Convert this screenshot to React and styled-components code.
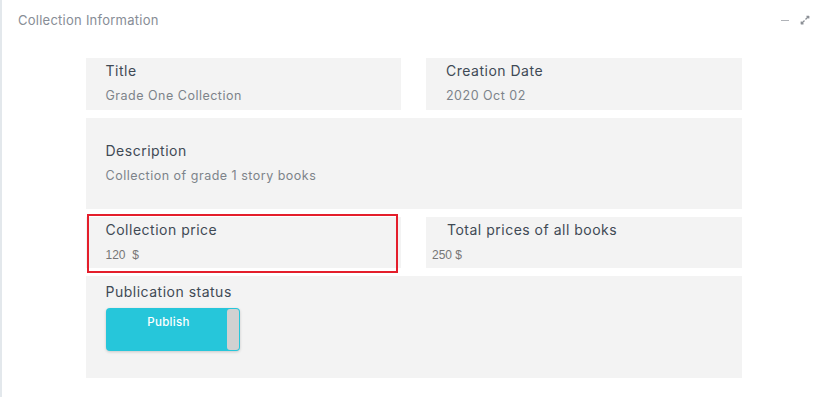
import styled, { createGlobalStyle } from 'styled-components';
import { FaExpandAlt } from 'react-icons/fa';

const GlobalStyle = createGlobalStyle`
  html, body {
    margin: 0;
    padding: 0;
    background: #fff;
  }
  body {
    font-family: Inter, "Noto Sans", sans-serif;
  }
`;

const Card = styled.section`
  height: 397px;
  box-sizing: border-box;
  border-left: 2px solid #e3e8ec;
  background: #fff;
`;

const Header = styled.header`
  display: flex;
  align-items: center;
  justify-content: space-between;
  padding: 10px 15px 10px 16px;
  line-height: 20px;
  & h2 {
    margin: 0;
    font-size: 13px;
    font-weight: 400;
    letter-spacing: 0.25px;
    color: #878d96;
  }
`;

const Tools = styled.div`
  display: flex;
  align-items: center;
  gap: 11px;
  color: #8c9096;
  & .minus {
    width: 8px;
    height: 1px;
    background: #b0b3b8;
  }
`;

const Grid = styled.div`
  width: 656px;
  margin: 18px auto 0;
  display: grid;
  grid-template-columns: 1fr 1fr;
  column-gap: 25px;
  row-gap: 8px;
`;

const Cell = styled.div`
  position: relative;
  grid-column: ${(p) => (p.$wide ? '1 / -1' : 'auto')};
  background: #f3f3f3;
  box-sizing: border-box;
  height: ${(p) => p.$h || 52}px;
  padding: ${(p) => p.$pad || '2px 20px 4px'};
  display: flex;
  flex-direction: column;
`;

const Label = styled.div`
  font-size: 14px;
  line-height: 21px;
  letter-spacing: 0.5px;
  color: #3f4a55;
  padding-left: ${(p) => p.$indent || 0}px;
`;

const Value = styled.div`
  margin-top: 5px;
  font-size: 12.5px;
  line-height: 20px;
  letter-spacing: 0.5px;
  color: #7d838a;
  margin-left: ${(p) => p.$shift || 0}px;
`;

const Money = styled(Value)`
  font-family: "Liberation Sans", Arial, sans-serif;
  font-size: 12px;
  letter-spacing: 0;
  color: #767676;
  white-space: pre;
`;

const Highlight = styled.div`
  position: absolute;
  left: 1px;
  right: 3px;
  top: -3px;
  bottom: -5px;
  border: 2px solid #e41e2b;
  pointer-events: none;
`;

const Toggle = styled.div`
  margin-top: 6px;
  width: 134px;
  height: 43px;
  box-sizing: border-box;
  display: flex;
  background: #26c6da;
  border-radius: 4px;
  box-shadow: 0 1px 3px rgba(0, 0, 0, 0.18);
  & span {
    flex: 1;
    padding: 6px 0 0 6px;
    text-align: center;
    font-size: 11.5px;
    font-weight: 500;
    letter-spacing: 0.3px;
    line-height: 16px;
    color: #fff;
  }
  & i {
    width: 12px;
    margin: 1px;
    background: #d1d1d1;
    border-radius: 3px;
  }
`;

export default function App() {
  return (
    <>
      <GlobalStyle />
      <Card>
        <Header>
          <h2>Collection Information</h2>
          <Tools>
            <span className="minus" />
            <FaExpandAlt size={10} />
          </Tools>
        </Header>
        <Grid>
          <Cell>
            <Label>Title</Label>
            <Value>Grade One Collection</Value>
          </Cell>
          <Cell>
            <Label>Creation Date</Label>
            <Value>2020 Oct 02</Value>
          </Cell>
          <Cell $wide $h={91} $pad="22px 20px 0">
            <Label>Description</Label>
            <Value>Collection of grade 1 story books</Value>
          </Cell>
          <Cell $h={51}>
            <Label>Collection price</Label>
            <Money>{'120  $'}</Money>
            <Highlight />
          </Cell>
          <Cell $h={51}>
            <Label $indent={1}>Total prices of all books</Label>
            <Money $shift={-14}>250 $</Money>
          </Cell>
          <Cell $wide $h={102} $pad="5px 20px 0">
            <Label>Publication status</Label>
            <Toggle>
              <span>Publish</span>
              <i />
            </Toggle>
          </Cell>
        </Grid>
      </Card>
    </>
  );
}
